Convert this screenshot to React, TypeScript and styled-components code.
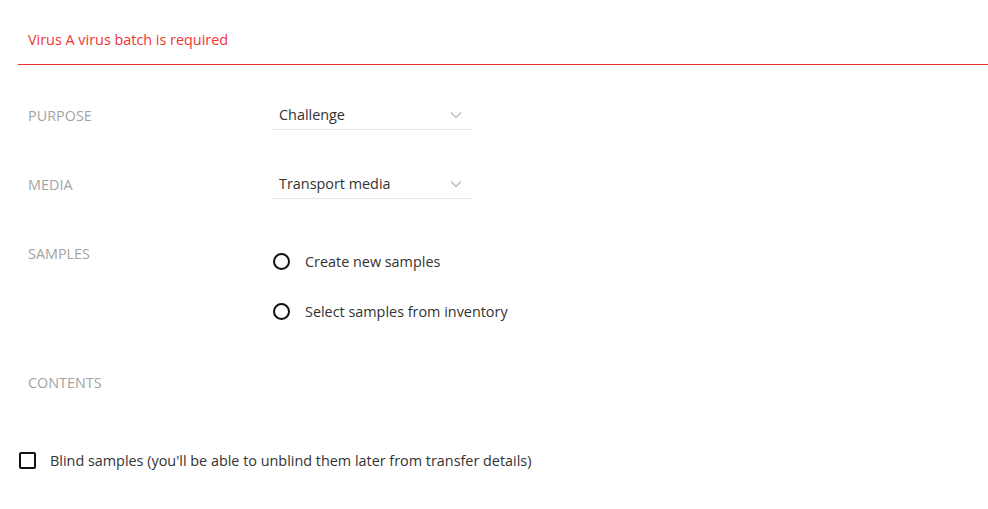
import styled, { createGlobalStyle } from "styled-components";

const GlobalStyle = createGlobalStyle`
  html, body {
    margin: 0;
    padding: 0;
    background: #fff;
  }
  body {
    font-family: "Open Sans", "Liberation Sans", sans-serif;
    font-size: 14.4px;
    color: #333;
  }
`;

const Page = styled.div`
  width: 988px;
  padding-left: 18px;
  box-sizing: border-box;
`;

const ErrorField = styled.div`
  padding: 30px 0 14px 10px;
  line-height: 20px;
  color: #f03434;
  border-bottom: 1px solid #f03434;
`;

const FormRow = styled.div<{ $top: number }>`
  display: flex;
  align-items: flex-start;
  margin-top: ${(p) => p.$top}px;
  padding-left: 10px;
`;

const Label = styled.div<{ $offset?: number }>`
  width: 244px;
  flex-shrink: 0;
  line-height: 20px;
  margin-top: ${(p) => p.$offset ?? 0}px;
  color: #a3a3a3;
  text-transform: uppercase;
`;

const SelectBox = styled.div`
  width: 200px;
  height: 30px;
  box-sizing: border-box;
  display: flex;
  align-items: center;
  justify-content: space-between;
  padding: 0 10px 0 7px;
  border-bottom: 1px solid #e6e6e6;
  color: #333;
  cursor: pointer;
`;

const RadioGroup = styled.div`
  display: flex;
  flex-direction: column;
  gap: 30px;
  padding-top: 7px;
`;

const RadioItem = styled.label`
  display: flex;
  align-items: center;
  height: 20px;
  gap: 15px;
  cursor: pointer;
`;

const RadioCircle = styled.span`
  width: 17px;
  height: 17px;
  box-sizing: border-box;
  border: 2px solid #111;
  border-radius: 50%;
  margin-left: 1px;
`;

const CheckRow = styled.label`
  display: flex;
  align-items: center;
  gap: 14px;
  height: 20px;
  margin-top: 57px;
  padding-left: 1px;
  cursor: pointer;
`;

const CheckBox = styled.span`
  width: 17px;
  height: 17px;
  box-sizing: border-box;
  border: 2px solid #111;
  border-radius: 2px;
`;

const Chevron = () => (
  <svg width="12" height="8" viewBox="0 0 12 8" fill="none">
    <path d="M1 1.5L6 6.5L11 1.5" stroke="#bdbdbd" strokeWidth="1.3" />
  </svg>
);

const Select = ({ value }: { value: string }) => (
  <SelectBox>
    <span>{value}</span>
    <Chevron />
  </SelectBox>
);

export default function App() {
  return (
    <Page>
      <GlobalStyle />
      <ErrorField>Virus A virus batch is required</ErrorField>

      <FormRow $top={35}>
        <Label $offset={6}>Purpose</Label>
        <Select value="Challenge" />
      </FormRow>

      <FormRow $top={39}>
        <Label $offset={6}>Media</Label>
        <Select value="Transport media" />
      </FormRow>

      <FormRow $top={45}>
        <Label>Samples</Label>
        <RadioGroup>
          <RadioItem>
            <RadioCircle />
            Create new samples
          </RadioItem>
          <RadioItem>
            <RadioCircle />
            Select samples from inventory
          </RadioItem>
        </RadioGroup>
      </FormRow>

      <FormRow $top={52}>
        <Label>Contents</Label>
      </FormRow>

      <CheckRow>
        <CheckBox />
        Blind samples (you'll be able to unblind them later from transfer details)
      </CheckRow>
    </Page>
  );
}
